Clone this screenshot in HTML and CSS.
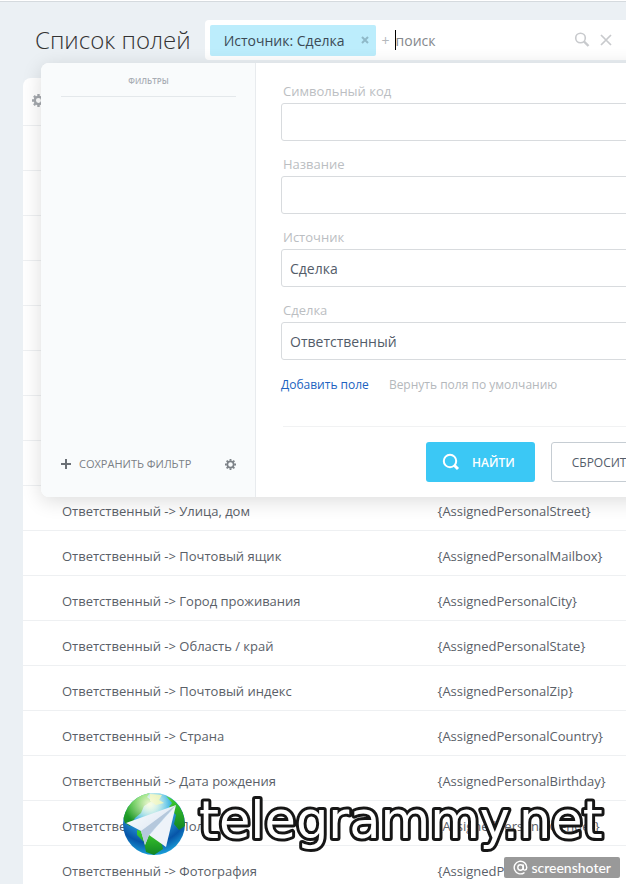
FILE: index.html
```html
<!DOCTYPE html>
<html lang="ru">
<head>
  <meta charset="UTF-8">
  <meta name="viewport" content="width=device-width, initial-scale=1.0">
  <title>Список полей</title>
  <link rel="stylesheet" href="styles.css">
</head>
<body>
<div class="page">
  <header class="header">
    <h1 class="title">Список полей</h1>
    <div class="search">
      <span class="tag">Источник: Сделка
        <button class="tag-remove" type="button" aria-label="Убрать">
          <svg width="8" height="8" viewBox="0 0 8 8"><path d="M1 1l6 6M7 1L1 7" stroke="#8fb9c8" stroke-width="2"/></svg>
        </button>
      </span>
      <span class="plus">+</span>
      <input class="search-input" type="text" placeholder="поиск" aria-label="поиск">
      <button class="icon-button" type="button" aria-label="Найти">
        <svg width="16" height="16" viewBox="0 0 16 16" fill="none" stroke="#c8cacd"><circle cx="6.5" cy="6" r="4.8" stroke-width="1.6"/><path d="M10 9.5l4.500 4.500" stroke-width="2.400"/></svg>
      </button>
      <button class="icon-button" type="button" aria-label="Очистить">
        <svg width="12" height="12" viewBox="0 0 12 12"><path d="M1 1l10 10M11 1L1 11" stroke="#c8cacd" stroke-width="1.700"/></svg>
      </button>
    </div>

    <!-- выпадающее окно фильтра -->
    <div class="popup">
      <aside class="sidebar">
        <h2 class="sidebar-title">Фильтры</h2>
        <div class="sidebar-footer">
          <button class="save" type="button">
            <svg width="10" height="10" viewBox="0 0 10 10"><path d="M5 0v10M0 5h10" stroke="#6b7076" stroke-width="2"/></svg>
            Сохранить фильтр
          </button>
          <button class="gear" type="button" aria-label="Настройки">
            <svg width="11" height="11" viewBox="-6 -6 12 12" fill="none" stroke="#7b8086"><circle r="3.400" stroke-width="1.800"/><path d="M0-6v2M0 4v2M-6 0h2M4 0h2M-4.200-4.200l1.300 1.300M2.900 2.900l1.300 1.300M4.200-4.200L2.900-2.900M-2.900 2.900l-1.300 1.300" stroke-width="2"/></svg>
          </button>
        </div>
      </aside>
      <form class="filter">
        <div class="field">
          <label for="code">Символьный код</label>
          <input id="code" type="text">
        </div>
        <div class="field">
          <label for="name">Название</label>
          <input id="name" type="text">
        </div>
        <div class="field">
          <label for="source">Источник</label>
          <select id="source"><option>Сделка</option></select>
        </div>
        <div class="field">
          <label for="deal">Сделка</label>
          <select id="deal"><option>Ответственный</option></select>
        </div>
        <div class="links">
          <a class="link-add" href="#">Добавить поле</a>
          <a class="link-reset" href="#">Вернуть поля по умолчанию</a>
        </div>
        <div class="actions">
          <button class="btn btn-find" type="button">
            <svg width="18" height="18" viewBox="0 0 18 18" fill="none" stroke="#fff"><circle cx="8" cy="8" r="6.200" stroke-width="2"/><path d="M12 12l4 4" stroke-width="3"/></svg>
            Найти
          </button>
          <button class="btn btn-clear" type="button">Сбросить</button>
        </div>
      </form>
    </div>
  </header>

  <table class="grid">
    <thead>
      <tr>
        <th colspan="2">
          <button class="gear" type="button" aria-label="Настройка колонок">
            <svg width="13" height="13" viewBox="-6 -6 12 12" fill="none" stroke="#a4a8ad"><circle r="3.400" stroke-width="2.200"/><path d="M0-6v2M0 4v2M-6 0h2M4 0h2M-4.200-4.200l1.300 1.300M2.900 2.900l1.300 1.300M4.200-4.200L2.900-2.900M-2.900 2.900l-1.300 1.300" stroke-width="2.200"/></svg>
          </button>
        </th>
      </tr>
    </thead>
    <tbody>
      <tr><td></td><td></td></tr>
      <tr><td></td><td></td></tr>
      <tr><td></td><td></td></tr>
      <tr><td></td><td></td></tr>
      <tr><td></td><td></td></tr>
      <tr><td></td><td></td></tr>
      <tr><td></td><td></td></tr>
      <tr><td></td><td></td></tr>
      <tr><td>Ответственный -&gt; Улица, дом</td><td>{AssignedPersonalStreet}</td></tr>
      <tr><td>Ответственный -&gt; Почтовый ящик</td><td>{AssignedPersonalMailbox}</td></tr>
      <tr><td>Ответственный -&gt; Город проживания</td><td>{AssignedPersonalCity}</td></tr>
      <tr><td>Ответственный -&gt; Область / край</td><td>{AssignedPersonalState}</td></tr>
      <tr><td>Ответственный -&gt; Почтовый индекс</td><td>{AssignedPersonalZip}</td></tr>
      <tr><td>Ответственный -&gt; Страна</td><td>{AssignedPersonalCountry}</td></tr>
      <tr><td>Ответственный -&gt; Дата рождения</td><td>{AssignedPersonalBirthday}</td></tr>
      <tr><td>Ответственный -&gt; Пол</td><td>{AssignedPersonalGender}</td></tr>
      <tr><td>Ответственный -&gt; Фотография</td><td>{AssignedPersonalPhoto}</td></tr>
    </tbody>
  </table>
</div>

<div class="watermark">
  <svg class="globe" width="64" height="64" viewBox="0 0 64 64">
    <defs>
      <radialGradient id="sea" cx="45%" cy="20%" r="80%">
        <stop offset="0" stop-color="#c9f5ff"/>
        <stop offset=".35" stop-color="#36b4e8"/>
        <stop offset=".75" stop-color="#0755a8"/>
        <stop offset="1" stop-color="#1ba3dc"/>
      </radialGradient>
      <radialGradient id="glow" cx="42%" cy="18%" r="38%">
        <stop offset="0" stop-color="#fffde0" stop-opacity=".9"/>
        <stop offset="1" stop-color="#fffde0" stop-opacity="0"/>
      </radialGradient>
      <linearGradient id="land" x1="0" y1="0" x2="0" y2="1">
        <stop offset="0" stop-color="#3fcf2c"/>
        <stop offset="1" stop-color="#118525"/>
      </linearGradient>
      <linearGradient id="plane" x1="0" y1="0" x2="1" y2="1">
        <stop offset="0" stop-color="#fff"/>
        <stop offset="1" stop-color="#cddced"/>
      </linearGradient>
      <clipPath id="ball"><circle cx="32" cy="32" r="31"/></clipPath>
    </defs>
    <g clip-path="url(#ball)">
      <circle cx="32" cy="32" r="32" fill="url(#sea)"/>
      <path d="M4 17C8 7 18 1 28 1l-3 4 5 4-8 5-3 7-6 5-5 8-5-3-3-8z" fill="url(#land)"/>
      <path d="M28 2l12 1-3 5 5 3-8 2-6-4z" fill="#d9edaa"/>
      <path d="M44 4c8 3 15 10 18 20l1 10-6 4-5-6 2-9-7-8 3-4z" fill="url(#land)"/>
      <path d="M15 38l11 3 13 8 2 8-9 6-8-3-2-10-7-7z" fill="url(#land)"/>
      <circle cx="32" cy="32" r="32" fill="url(#glow)"/>
    </g>
    <path d="M4 31L54 13 27 43 23 53 19 39z" fill="url(#plane)"/>
    <path d="M19 39L54 13 27 43 23 53z" fill="#b5c8dc"/>
    <path d="M27 43L54 13 44 55z" fill="#eef3f9"/>
  </svg>
  <svg class="watermark-text" width="420" height="64">
    <text x="3" y="46">telegrammy.net</text>
  </svg>
</div>

<div class="badge">
  <svg width="15" height="15" viewBox="0 0 15 15" fill="none" stroke="#fff" stroke-width="1.400" stroke-linecap="round"><circle cx="7.500" cy="7.500" r="2.700"/><path d="M10.200 5v3.500c0 2.400 3.600 2.200 3.600-1A6.300 6.300 0 1 0 11 12.800"/></svg>
  screenshoter
</div>
</body>
</html>
```

FILE: styles.css
```css
* {
  box-sizing: border-box;
}
body {
  margin: 0;
  font-family: "Open Sans", "Noto Sans", sans-serif;
  font-size: 13px;
  color: #5a6068;
  background-color: #ebf0f4;
}
button {
  padding: 0;
  border: none;
  background: none;
  font-family: inherit;
  cursor: pointer;
}
svg {
  display: block;
}
.page {
  height: 100vh;
  padding-left: 23px;
  border-top: 1px solid #fff;
  box-shadow: inset 0 1px #d5dade;
  overflow: hidden;
}

/* шапка */
.header {
  position: relative;
  display: flex;
  align-items: center;
  gap: 14px;
  padding: 19px 0 18px 12px;
}
.title {
  margin: 0;
  font-size: 24px;
  font-weight: 300;
  line-height: 40px;
  color: #333;
  white-space: nowrap;
}
.search {
  display: flex;
  flex: 1;
  align-items: center;
  min-width: 0;
  height: 40px;
  padding: 0 14px 0 5px;
  border-radius: 4px 0 0 4px;
  background-color: #fff;
}
.tag {
  display: flex;
  align-items: center;
  gap: 16px;
  height: 31px;
  padding: 0 7px 0 14px;
  border-radius: 2px;
  background-color: #bcedfc;
  font-size: 14px;
  color: #3b4a55;
  white-space: nowrap;
}
.plus {
  padding: 0 5px 0 6px;
  font-size: 14px;
  color: #b4b8bc;
}
.search-input {
  flex: 1;
  min-width: 0;
  height: 20px;
  padding: 0;
  border: none;
  border-left: 1px solid #000;
  outline: none;
  background: none;
  font-family: inherit;
  font-size: 14px;
}
.search-input::placeholder {
  color: #85888c;
}
.icon-button {
  margin-left: 10px;
}

/* окно фильтра */
.popup {
  position: absolute;
  top: 62px;
  left: 18px;
  right: -40px;
  z-index: 1;
  display: flex;
  border-radius: 8px;
  background-color: #fff;
  box-shadow: 0 4px 20px rgba(0, 0, 0, 0.14);
}
.sidebar {
  display: flex;
  flex-direction: column;
  justify-content: space-between;
  width: 215px;
  padding: 10px 19px 24px 20px;
  border-right: 1px solid #e8ebee;
  border-radius: 8px 0 0 8px;
  background-color: #f9fbfc;
}
.sidebar-title {
  margin: 0;
  padding-bottom: 7px;
  border-bottom: 1px solid #e4e8eb;
  font-size: 8px;
  font-weight: 600;
  line-height: 16px;
  text-align: center;
  text-transform: uppercase;
  color: #a8adb4;
}
.sidebar-footer {
  display: flex;
  align-items: center;
  justify-content: space-between;
}
.save {
  display: flex;
  align-items: center;
  gap: 8px;
  font-size: 11px;
  line-height: 18px;
  text-transform: uppercase;
  color: #7b8086;
}
.filter {
  flex: 1;
  padding: 18px 0 15px 25px;
}
.field {
  margin-bottom: 13px;
}
.field label {
  display: block;
  padding: 0 2px 2px;
  font-size: 13px;
  line-height: 20px;
  color: #bbbec2;
}
.field input,
.field select {
  display: block;
  width: 100%;
  height: 38px;
  padding: 0 8px;
  border: 1px solid #d8dbde;
  border-radius: 3px;
  appearance: none;
  background-color: #fff;
  font-family: inherit;
  font-size: 14px;
  color: #535c69;
}
.links {
  display: flex;
  gap: 20px;
  padding: 2px 0 31px;
  line-height: 20px;
}
.links a {
  font-size: 12px;
  text-decoration: none;
}
.links .link-add {
  color: #2062c0;
}
.links .link-reset {
  color: #b4b8bc;
}
.actions {
  display: flex;
  gap: 16px;
  margin-left: 2px;
  padding: 15px 0 0 143px;
  border-top: 1px solid #f1f2f3;
}
.btn {
  display: flex;
  align-items: center;
  gap: 12px;
  height: 40px;
  border-radius: 3px;
  font-size: 12px;
  text-transform: uppercase;
}
.btn-find {
  padding: 0 20px 0 16px;
  background-color: #3bc8f5;
  font-weight: 600;
  color: #fff;
}
.btn-clear {
  padding: 0 20px;
  border: 1px solid #c6cdd3;
  color: #535c69;
}

/* таблица */
.grid {
  width: 100%;
  border-collapse: separate;
  border-spacing: 0;
  border-radius: 8px 0 0 0;
  background-color: #fff;
  table-layout: fixed;
}
.grid th {
  height: 48px;
  padding: 0 9px;
  border-bottom: 1px solid #eef0f2;
  text-align: left;
}
.grid td {
  height: 45px;
  padding: 5px 0 0 39px;
  border-bottom: 1px solid #eef0f2;
  white-space: nowrap;
}
.grid td + td {
  padding-left: 113px;
}

/* водяной знак */
.watermark {
  position: fixed;
  bottom: 28px;
  left: 122px;
  z-index: 2;
  display: flex;
  align-items: center;
  gap: 10px;
}
.watermark-text {
  overflow: visible;
  font-family: "DejaVu Sans", sans-serif;
  font-size: 51px;
  fill: #fff;
  stroke: #161616;
  stroke-width: 6px;
  stroke-linejoin: round;
  paint-order: stroke fill;
}
.badge {
  position: fixed;
  right: 6px;
  bottom: 6px;
  z-index: 3;
  display: flex;
  align-items: center;
  gap: 3px;
  height: 21px;
  padding: 0 9px;
  border-radius: 2px;
  background-color: #999;
  font-family: Lato, sans-serif;
  font-size: 14px;
  font-weight: 500;
  color: #fff;
}
```
